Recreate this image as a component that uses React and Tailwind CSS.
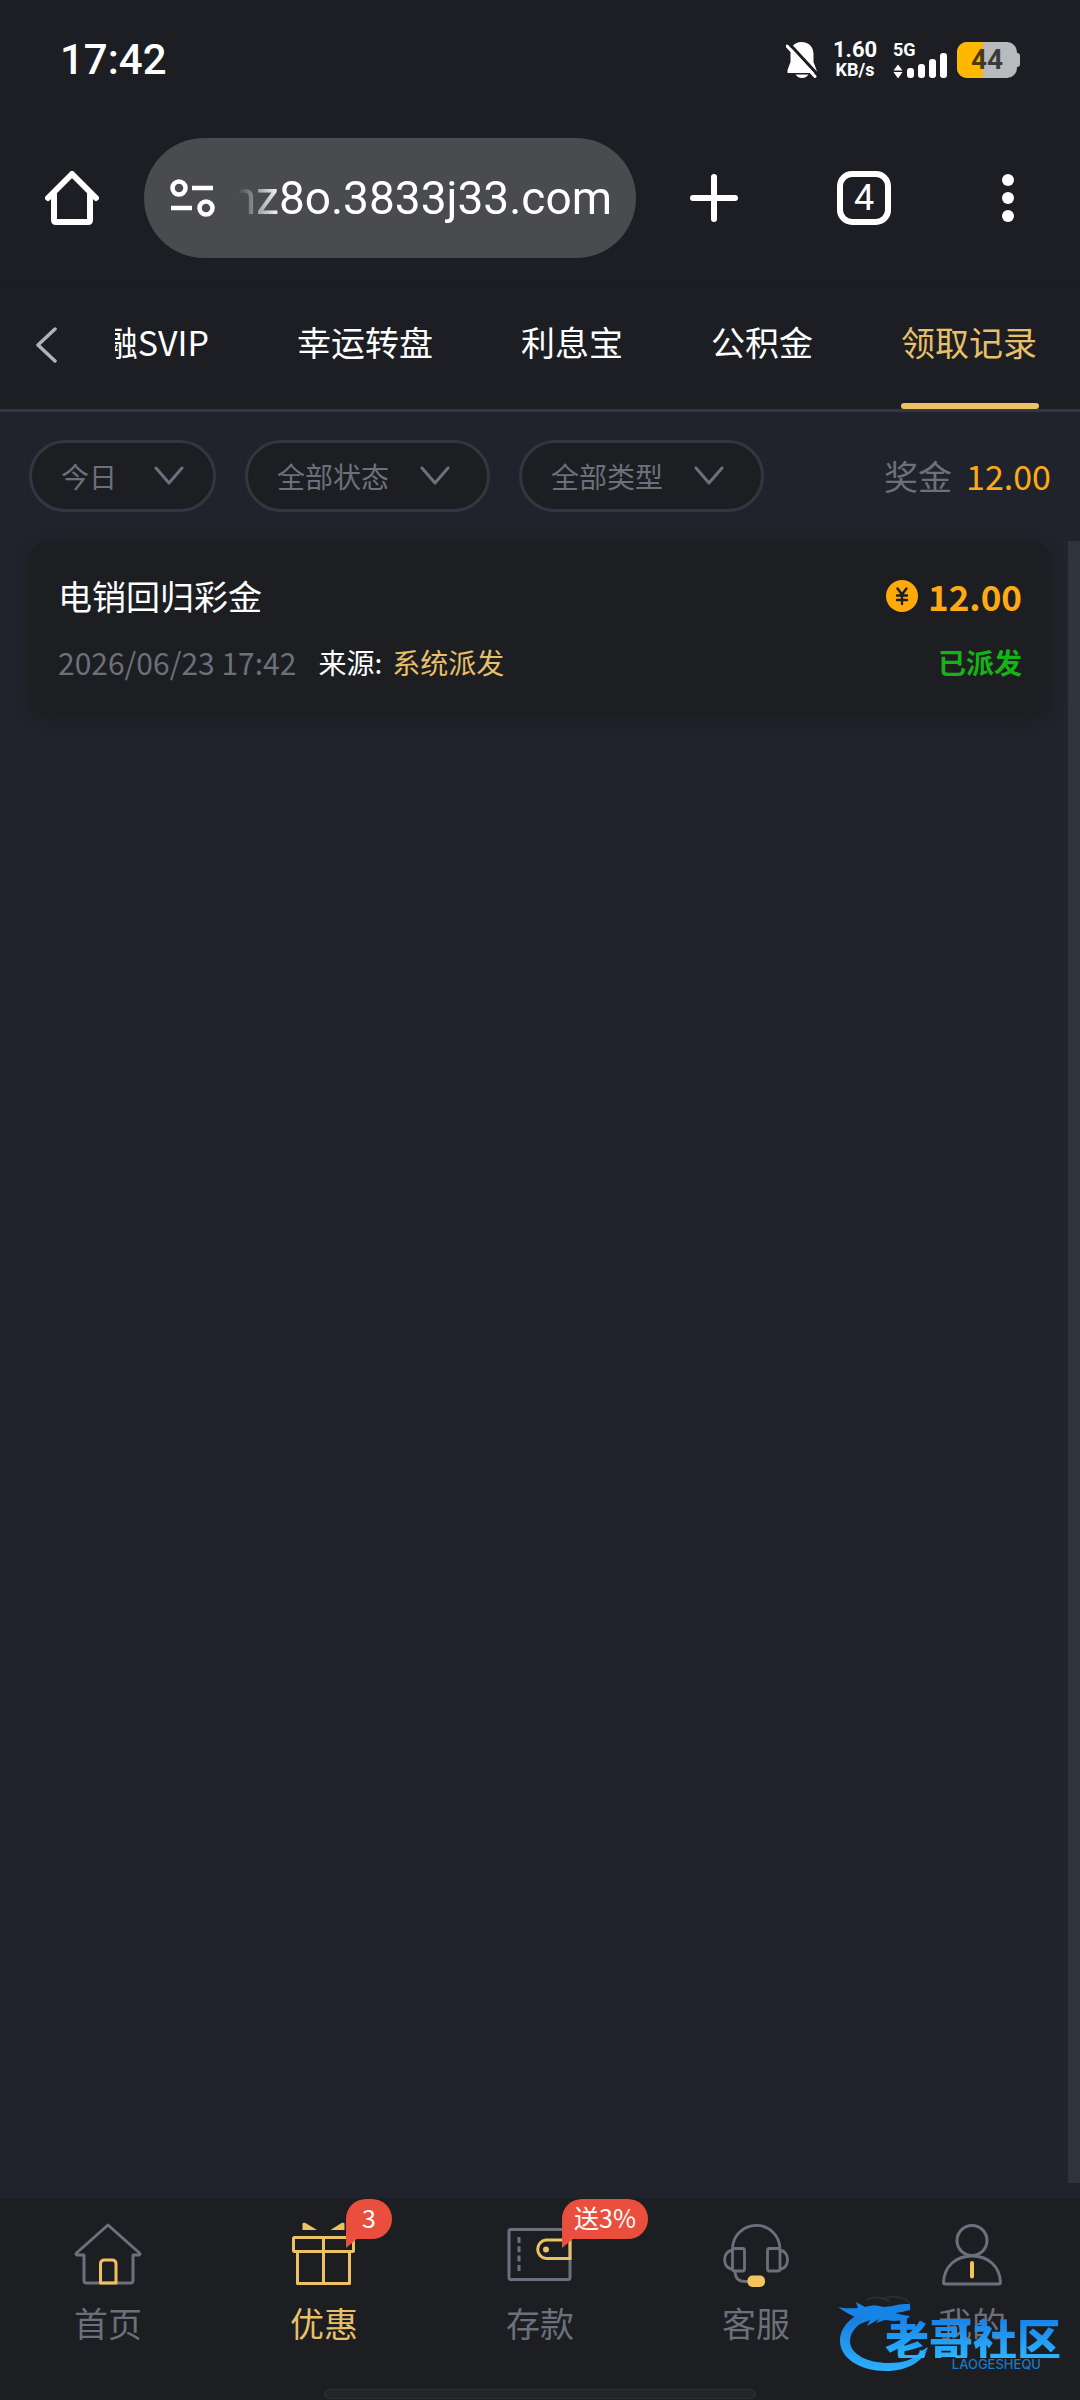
import { useState } from 'react';

const tabs = ['融SVIP', '幸运转盘', '利息宝', '公积金', '领取记录'];

const filters = [
  { id: 'date', label: '日期', width: 'w-[187px]', arrow: 'right-[32px]', options: ['今日', '昨日', '近7日'] },
  { id: 'status', label: '状态', width: 'w-[245px]', arrow: 'right-[40px]', options: ['全部状态', '已派发', '待领取'] },
  { id: 'type', label: '类型', width: 'w-[245px]', arrow: 'right-[40px]', options: ['全部类型', '彩金', '返水'] },
];

const records = [
  { id: 1, title: '电销回归彩金', time: '2026/06/23 17:42', source: '系统派发', amount: '12.00', status: '已派发' },
];

const HomeIcon = () => (
  <svg viewBox="0 0 72 72" className="size-[72px]" fill="none" strokeWidth="3" strokeLinejoin="round" strokeLinecap="round">
    <path d="M12 37v25.500q0 2.500 2.500 2.500h44q2.500 0 2.500-2.500V37h6q1.500-.8.500-2L36 7 4.500 35q-1 1.200.5 2z" stroke="#6b707c" />
    <path d="M28.500 65V46q0-4 4-4h7.500q4 0 4 4v19z" stroke="#edc263" />
  </svg>
);

const GiftIcon = () => (
  <svg viewBox="0 0 72 72" className="size-[72px]" fill="none" stroke="#edc263" strokeWidth="3" strokeLinejoin="round">
    <rect x="5.500" y="19.500" width="60" height="14" rx="1" />
    <path d="M9.500 33.500v32h52v-32M35.500 19.500v46" />
    <path d="M14.500 12V6q0-2 3-1L29 12zM56.500 12V6q0-2-3-1L42.500 12z" fill="#edc263" stroke="none" />
  </svg>
);

const WalletIcon = () => (
  <svg viewBox="0 0 72 72" className="size-[72px]" fill="none" stroke="#6b707c" strokeWidth="3">
    <rect x="5" y="11.500" width="61" height="50" rx="2" />
    <path d="M15 19v36" strokeDasharray="6 3.300" />
    <path d="M66 22H42a9.300 9.300 0 0 0 0 18.500h24z" stroke="#edc263" />
    <circle cx="42" cy="31.500" r="3" fill="#edc263" stroke="none" />
  </svg>
);

const HeadsetIcon = () => (
  <svg viewBox="0 0 72 72" className="size-[72px]" fill="none" stroke="#6b707c" strokeWidth="2.800">
    <path d="M12.500 31a23.700 23.700 0 0 1 47.400 0" />
    <rect x="12.500" y="30.500" width="12" height="22.500" rx="2" />
    <rect x="47.500" y="30.500" width="12.500" height="22.500" rx="2" />
    <path d="M12.500 32.500c-10.500 0-10.500 18.500 0 18.500M60 32.500c10 0 10 18.500 0 18.500M15 53q0 10.500 10 10.500h4" />
    <rect x="27.500" y="57.500" width="17.500" height="11.500" rx="5" fill="#f3c35c" stroke="none" />
  </svg>
);

const UserIcon = () => (
  <svg viewBox="0 0 72 72" className="size-[72px]" fill="none" stroke="#6b707c" strokeWidth="3" strokeLinejoin="round">
    <circle cx="36" cy="22.500" r="15" />
    <path d="M36 38c16 0 27.500 10 28.500 26q0 2-2 2h-53q-2 0-2-2C8.500 48 20 38 36 38z" />
    <path d="M36 45v13.500" stroke="#f3c35c" strokeWidth="4" strokeLinecap="round" />
  </svg>
);

const navItems = [
  { label: '首页', Icon: HomeIcon },
  { label: '优惠', Icon: GiftIcon, badge: '3', badgeWidth: 'w-[46px]', active: true },
  { label: '存款', Icon: WalletIcon, badge: '送3%', badgeWidth: 'w-[86px]' },
  { label: '客服', Icon: HeadsetIcon },
  { label: '我的', Icon: UserIcon },
];

const StatusBar = () => (
  <div className="flex h-[120px] items-center justify-between px-[60px] font-[Roboto] text-white">
    <span className="text-[42px] leading-none font-medium">17:42</span>
    <div className="flex h-[36px] items-center">
      <svg viewBox="0 0 31 36" className="h-[36px] w-[31px]">
        <path d="M15.500 0C23 0 27.500 5 27.500 12v8l3 8v3h-29v-3l3-8v-8C4.500 5 8 0 15.500 0zM9.500 32.500h13q-2.500 3.500-6.500 3.500t-6.500-3.500z" fill="#fff" />
        <path d="M3.500 2L33 34" stroke="#1d1e23" strokeWidth="3" />
        <path d="M1 4L29 34.500" stroke="#fff" strokeWidth="3" strokeLinecap="round" />
      </svg>
      <div className="ml-4 flex w-[44px] flex-col items-center font-bold">
        <span className="text-[22px] leading-5">1.60</span>
        <span className="text-[18px] leading-5">KB/s</span>
      </div>
      <div className="relative ml-4 h-[36px] w-[54px]">
        <span className="absolute top-0 left-0 text-[18px] leading-4 font-bold">5G</span>
        <svg viewBox="0 0 54 36" className="h-[36px] w-[54px]" fill="#fff">
          <path d="M5 22.500l4.500 6h-9zM5 36.500l4.500-6.500h-9z" />
          <rect x="14" y="26" width="7" height="10" rx="3" />
          <rect x="25" y="22" width="7" height="14" rx="3" />
          <rect x="36" y="17" width="7" height="19" rx="3" />
          <rect x="47" y="11" width="7" height="25" rx="3" />
        </svg>
      </div>
      <div className="relative ml-[10px] flex h-[36px] w-[60px] items-center justify-center overflow-hidden rounded-[10px] bg-[#b9babd]">
        <div className="absolute inset-y-0 left-0 w-[44%] bg-[#ffb800]" />
        <span className="relative text-[28px] leading-none font-bold text-black/70">44</span>
      </div>
      <div className="h-[14px] w-[3px] rounded-r-sm bg-[#b9babd]" />
    </div>
  </div>
);

const BrowserBar = () => (
  <div className="flex h-[165px] items-center border-b border-[#1a1b1f] pr-[46px] pb-[8px] pl-[45px] font-[Roboto] text-white">
    <button type="button" aria-label="主页">
      <svg viewBox="0 0 54 54" className="size-[54px]" fill="none" stroke="#fff" strokeWidth="6" strokeLinejoin="round" strokeLinecap="round">
        <path d="M3 27L27 3l24 24M9 23v26q0 2 2 2h32q2 0 2-2V23" />
      </svg>
    </button>
    <div className="ml-[45px] flex h-[120px] min-w-0 flex-1 items-center rounded-full bg-[#4a4b4e] pr-[24px] pl-[26px]">
      <svg viewBox="0 0 46 38" className="h-[38px] w-[46px] shrink-0" fill="none" stroke="#fff" strokeWidth="4.500">
        <circle cx="9" cy="9" r="6.500" />
        <path d="M22 9h21M1 29h21" />
        <circle cx="36" cy="29" r="6.500" />
      </svg>
      <input
        type="text"
        aria-label="网址"
        defaultValue="nz8o.3833j33.com"
        className="ml-[4px] min-w-0 flex-1 bg-transparent text-right text-[46px] leading-[60px] text-white outline-none [mask-image:linear-gradient(to_right,transparent_18px,black_60px)]"
      />
    </div>
    <button type="button" aria-label="新标签页" className="ml-[54px]">
      <svg viewBox="0 0 48 48" className="size-[48px]" stroke="#fff" strokeWidth="6" strokeLinecap="round">
        <path d="M24 3v42M3 24h42" />
      </svg>
    </button>
    <button type="button" className="ml-[99px] flex size-[54px] items-center justify-center rounded-[15px] border-[6px] border-white text-[36px] leading-none">
      4
    </button>
    <button type="button" aria-label="菜单" className="ml-[91px]">
      <svg viewBox="0 0 52 48" className="h-[48px] w-[52px]" fill="#fff">
        <circle cx="26" cy="6" r="6" />
        <circle cx="26" cy="24" r="6" />
        <circle cx="26" cy="42" r="6" />
      </svg>
    </button>
  </div>
);

const TabBar = () => {
  const [active, setActive] = useState('领取记录');

  return (
    <div className="flex h-[127px] items-center border-b-[3px] border-[#343742] pr-[41px]">
      <button type="button" aria-label="返回" className="ml-[35px] w-[80px] shrink-0 pb-[4px]">
        <svg viewBox="0 0 24 36" className="h-[36px] w-[24px]" fill="none" stroke="#aeb3be" strokeWidth="3.500" strokeLinecap="round" strokeLinejoin="round">
          <path d="M20 2L3 18l17 16" />
        </svg>
      </button>
      <div className="flex h-full min-w-0 flex-1 justify-end gap-[86px] overflow-hidden">
        {tabs.map((tab) => (
          <button
            key={tab}
            type="button"
            onClick={() => setActive(tab)}
            className={`relative h-full shrink-0 pr-[2px] pb-[12px] text-[34px] whitespace-nowrap ${active === tab ? 'text-[#e8c068]' : 'text-white'}`}
          >
            {tab}
            {active === tab && <span className="absolute inset-x-0 bottom-0 h-[6px] rounded-full bg-[#edc263]" />}
          </button>
        ))}
      </div>
    </div>
  );
};

const FilterBar = () => (
  <div className="flex items-center gap-[29px] px-[29px] pt-[28px] pb-[29px]">
    {filters.map((filter) => (
      <div key={filter.id} className={`relative ${filter.width}`}>
        <select
          aria-label={filter.label}
          className="block h-[72px] w-full appearance-none rounded-full border-[3px] border-[#333640] bg-[#1d1e22] pl-[29px] text-[28px] text-[#6b707a] outline-none"
        >
          {filter.options.map((option) => (
            <option key={option}>{option}</option>
          ))}
        </select>
        <svg viewBox="0 0 30 20" className={`pointer-events-none absolute top-[26px] h-[20px] w-[30px] ${filter.arrow}`} fill="none" stroke="#6b707c" strokeWidth="3" strokeLinecap="round" strokeLinejoin="round">
          <path d="M2 2l13 15L28 2" />
        </svg>
      </div>
    ))}
    <p className="ml-auto flex gap-[14px] text-[34px] leading-[50px] whitespace-nowrap">
      <span className="text-[#6b707a]">奖金</span>
      <span className="text-[#ffaa14]">12.00</span>
    </p>
  </div>
);

const RecordCard = ({ record }) => (
  <div className="rounded-[20px] bg-[#1d1e22] px-[29px] pt-[27px] pb-[34px] shadow-[0_4px_12px_#1d1e22]">
    <div className="flex items-center justify-between leading-[56px]">
      <h2 className="text-[34px] text-white">{record.title}</h2>
      <div className="flex items-center gap-[10px]">
        <svg viewBox="0 0 32 32" className="size-[32px]">
          <circle cx="16" cy="16" r="16" fill="#ffaa09" />
          <path d="M11.500 8.500l4.500 6 4.500-6M16 14.500V24M11 15.500h10M11 20h10" stroke="#1d1e22" strokeWidth="2.400" strokeLinecap="round" fill="none" />
        </svg>
        <span className="text-[35px] font-bold text-[#ffaa14]">{record.amount}</span>
      </div>
    </div>
    <div className="mt-[18px] flex items-center justify-between text-[28px] leading-[40px]">
      <p className="flex items-center">
        <span className="text-[30px] text-[#6b707a]">{record.time}</span>
        <span className="ml-[22px] text-white">来源:</span>
        <span className="ml-[10px] text-[#e8c068]">{record.source}</span>
      </p>
      <span className="font-bold text-[#16b216]">{record.status}</span>
    </div>
  </div>
);

const Watermark = () => (
  <div className="pointer-events-none absolute right-[19px] bottom-[29px] h-[75px] w-[223px]">
    <svg viewBox="0 0 223 75" className="absolute inset-0 h-full w-full">
      <defs>
        <linearGradient id="dragon" x1="0" y1="0" x2="0" y2="1">
          <stop offset="0" stopColor="#1478dc" />
          <stop offset="1" stopColor="#2cb0ff" />
        </linearGradient>
      </defs>
      <path d="M26 16C12 21 2 32 2 45c0 17 20 30 46 30 22 0 38-10 42-24l-7 4c-6 8-16 12-32 12-22 0-39-9-39-22 0-10 9-19 22-23z" fill="url(#dragon)" />
      <path d="M0 11c7 2 13 1 20 1l-2-6 9 5c7-2 12-2 18 0l10-1c6-2 12-2 17-2v6l-8 2-7 1 8 2 7 1-4 4-12 1-9-1-9 3 3-4-12 7 3-6-10 4 5-7-8 1C11 18 5 15 0 11z" fill="#1684e6" />
      <path d="M28 4c9-5 16-2 24 1M46 2c12-3 24 0 26 6" stroke="#2b2d33" strokeWidth="2" fill="none" />
    </svg>
    <span className="absolute right-0 bottom-[13px] bg-gradient-to-b from-[#1a80e6] to-[#2cb4ff] bg-clip-text text-[44px] leading-[40px] font-black whitespace-nowrap text-transparent">老哥社区</span>
    <span className="absolute right-[20px] bottom-0 font-[Inter] text-[13px] leading-[14px] font-medium text-[#1a78c8]">LAOGESHEQU</span>
  </div>
);

const BottomNav = () => (
  <footer className="relative bg-[#1d1e22]">
    <nav className="grid grid-cols-5 pt-5">
      {navItems.map(({ label, Icon, badge, badgeWidth, active }) => (
        <a key={label} href="#" className={`relative flex flex-col items-center ${active ? 'text-[#e8c068]' : 'text-[#6b707a]'}`}>
          <Icon />
          <span className="mt-[8px] text-[34px] leading-[50px]">{label}</span>
          {badge && (
            <span className={`absolute -top-[19px] left-[130px] flex h-[40px] items-center justify-center rounded-[20px] rounded-bl-none bg-[#ea4f3d] pb-[3px] text-[25px] leading-none text-white ${badgeWidth}`}>
              {badge}
              <svg viewBox="0 0 12 10" className="absolute top-[39px] left-0 h-[10px] w-[12px]">
                <path d="M0 0h12L0 10z" fill="#ea4f3d" />
              </svg>
            </span>
          )}
        </a>
      ))}
    </nav>
    <div className="mx-auto mt-[41px] h-[10px] w-2/5 rounded-full border border-[#303135] bg-[#242529]" />
    <div className="h-px" />
    <Watermark />
  </footer>
);

const App = () => (
  <div className="flex min-h-screen flex-col bg-[#20232b] font-['Noto_Sans_CJK_SC',sans-serif]">
    <header className="bg-[#1d1e23]">
      <StatusBar />
      <BrowserBar />
      <TabBar />
    </header>
    <main className="flex flex-1 flex-col">
      <FilterBar />
      <div className="mb-[15px] flex flex-1">
        <div className="min-w-0 flex-1 pr-[17px] pl-[29px]">
          {records.map((record) => (
            <RecordCard key={record.id} record={record} />
          ))}
        </div>
        <div className="w-3 bg-[#2e333e]" />
      </div>
    </main>
    <BottomNav />
  </div>
);

export default App;
